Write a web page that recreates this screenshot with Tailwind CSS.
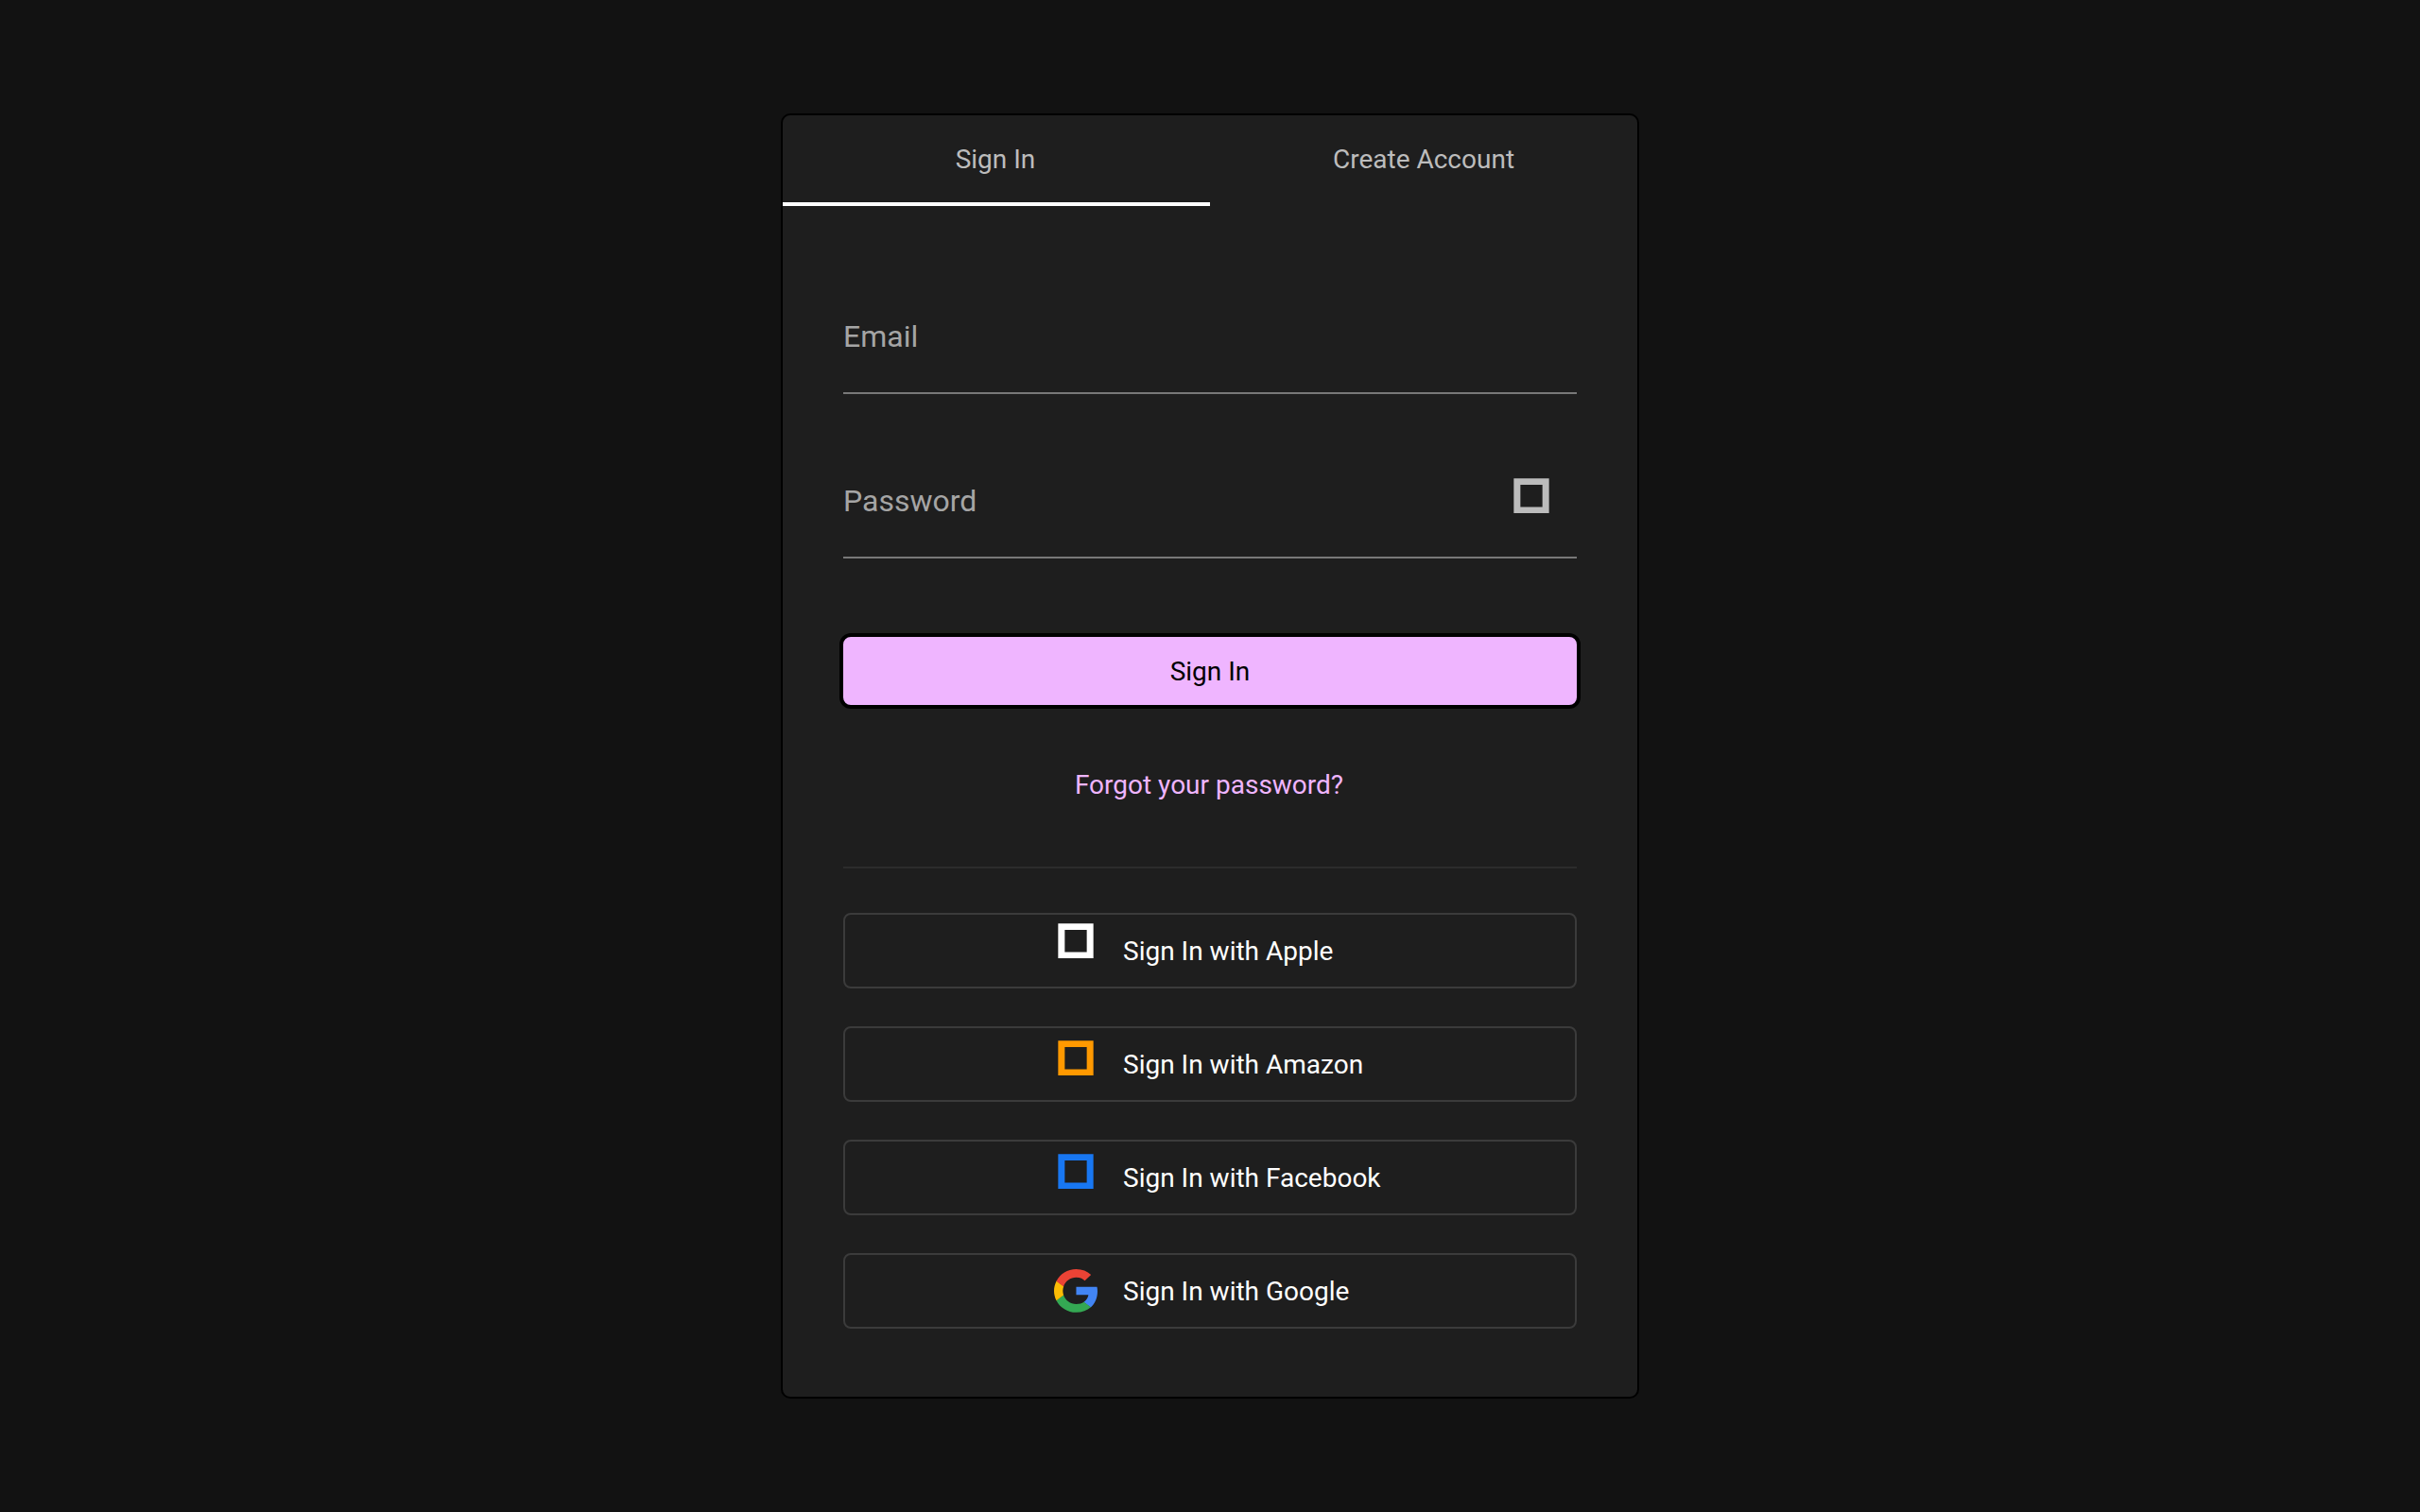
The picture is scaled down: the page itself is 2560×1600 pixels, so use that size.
<!DOCTYPE html>
<html lang="en">
<head>
<meta charset="utf-8">
<title>Sign In</title>
<script src="https://cdn.jsdelivr.net/npm/@tailwindcss/browser@4"></script>
</head>
<body class="bg-[#121212] font-['Roboto',sans-serif] text-[28px] leading-8 text-white">
<main class="flex h-[1600px] w-[2560px] items-center justify-center">
  <section class="flex h-[1360px] w-[908px] flex-col rounded-[10px] border-2 border-black bg-[#1e1e1e]">
    <nav class="grid h-24 shrink-0 grid-cols-2 text-[#bcbcbc]">
      <button class="flex items-start justify-center border-b-4 border-white pt-[31px] pr-[2px]">Sign In</button>
      <button class="flex items-start justify-center pt-[31px]">Create Account</button>
    </nav>
    <form class="flex flex-col px-16 pt-[110px]">
      <label class="flex h-[89px] shrink-0 border-b-2 border-[#787878] pt-[10px] text-[32px] leading-9 text-[#a5a5a5]">Email</label>
      <label class="mt-[85px] flex h-[89px] shrink-0 justify-between border-b-2 border-[#787878] pr-[29px] text-[32px] leading-9 text-[#a5a5a5]">
        <span class="pt-[10px]">Password</span>
        <svg class="mt-[4px] h-[38px] w-[38px]" viewBox="0 0 38 38" fill="#bcbcbc" fill-rule="evenodd"><path d="M.35.3H37.65V37H.35ZM7.35 7V30.4H30.65V7Z"/></svg>
      </label>
      <button type="button" class="-mx-1 mt-[79px] flex h-20 justify-center rounded-xl border-4 border-black bg-[#efb5ff] pt-[21px] text-black">Sign In</button>
      <a class="mt-[65px] pr-[2px] text-center text-[#efb5ff]">Forgot your password?</a>
      <hr class="mt-[70px] border-t-2 border-[#2c2c2c]">
      <div class="mt-[47px] flex flex-col gap-10">
        <button type="button" class="flex h-20 rounded-lg border-2 border-[#3b3b3b] pl-[221px]">
          <svg class="ml-[4px] mt-[9px] h-[38px] w-[38px]" viewBox="0 0 38 38" fill="#fff" fill-rule="evenodd"><path d="M.35.3H37.65V37H.35ZM7.35 7V30.4H30.65V7Z"/></svg>
          <span class="ml-[31px] mt-[23px]">Sign In with Apple</span>
        </button>
        <button type="button" class="flex h-20 rounded-lg border-2 border-[#3b3b3b] pl-[221px]">
          <svg class="ml-[4px] mt-[13px] h-[38px] w-[38px]" viewBox="0 0 38 38" fill="#f90" fill-rule="evenodd"><path d="M.35.3H37.65V37H.35ZM7.35 7V30.4H30.65V7Z"/></svg>
          <span class="ml-[31px] mt-[23px]">Sign In with Amazon</span>
        </button>
        <button type="button" class="flex h-20 rounded-lg border-2 border-[#3b3b3b] pl-[221px]">
          <svg class="ml-[4px] mt-[13px] h-[38px] w-[38px]" viewBox="0 0 38 38" fill="#1877f2" fill-rule="evenodd"><path d="M.35.3H37.65V37H.35ZM7.35 7V30.4H30.65V7Z"/></svg>
          <span class="ml-[31px] mt-[23px]">Sign In with Facebook</span>
        </button>
        <button type="button" class="flex h-20 rounded-lg border-2 border-[#3b3b3b] pl-[221px]">
          <svg class="mt-[15px] h-[46px] w-[46px]" viewBox="0 0 256 262" preserveAspectRatio="none"><path fill="#4285f4" d="M255.878 133.451c0-10.734-.871-18.567-2.756-26.69H130.55v48.448h71.947c-1.45 12.04-9.283 30.172-26.69 42.356l-.244 1.622 38.755 30.023 2.685.268c24.659-22.774 38.875-56.282 38.875-96.027"/><path fill="#34a853" d="M130.55 261.1c35.248 0 64.839-11.605 86.453-31.622l-41.196-31.913c-11.024 7.688-25.82 13.055-45.257 13.055-34.523 0-63.824-22.773-74.269-54.25l-1.531.13-40.298 31.187-.527 1.465C35.393 231.798 79.49 261.1 130.55 261.1"/><path fill="#fbbc05" d="M56.281 156.37c-2.756-8.123-4.351-16.827-4.351-25.82 0-8.994 1.595-17.697 4.206-25.82l-.073-1.73L15.26 71.312l-1.335.635C5.077 89.644 0 109.517 0 130.55s5.077 40.905 13.925 58.602l42.356-32.782"/><path fill="#eb4335" d="M130.55 50.479c24.514 0 41.05 10.589 50.479 19.438l36.844-35.974C195.245 12.91 165.798 0 130.55 0 79.49 0 35.393 29.301 13.925 71.947l42.211 32.783c10.59-31.477 39.891-54.251 74.414-54.251"/></svg>
          <span class="ml-[27px] mt-[23px]">Sign In with Google</span>
        </button>
      </div>
    </form>
  </section>
</main>
</body>
</html>
